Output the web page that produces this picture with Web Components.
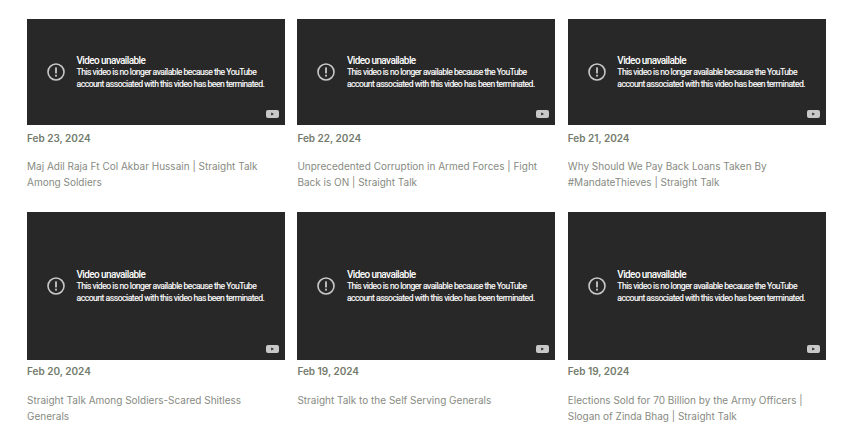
<!DOCTYPE html>
<html>
<head>
<meta charset="utf-8">
<style>
html, body { margin: 0; background: #fff; }
body { width: 862px; height: 432px; overflow: hidden; }
</style>
</head>
<body>
<post-grid>
  <video-card date="Feb 23, 2024" h="106" gap="6" tgap="13">Maj Adil Raja Ft Col Akbar Hussain | Straight Talk Among Soldiers</video-card>
  <video-card date="Feb 22, 2024" h="106" gap="6" tgap="13">Unprecedented Corruption in Armed Forces | Fight Back is ON | Straight Talk</video-card>
  <video-card date="Feb 21, 2024" h="106" gap="6" tgap="13">Why Should We Pay Back Loans Taken By #MandateThieves | Straight Talk</video-card>
  <video-card date="Feb 20, 2024" h="148" gap="4" tgap="14">Straight Talk Among Soldiers-Scared Shitless Generals</video-card>
  <video-card date="Feb 19, 2024" h="148" gap="4" tgap="14">Straight Talk to the Self Serving Generals</video-card>
  <video-card date="Feb 19, 2024" h="148" gap="4" tgap="14">Elections Sold for 70 Billion by the Army Officers | Slogan of Zinda Bhag | Straight Talk</video-card>
</post-grid>

<template id="grid-tpl">
<style>
:host { display: grid; grid-template-columns: repeat(3, 258px); column-gap: 12.4px; row-gap: 22px; padding: 19px 0 0 27px; }
</style>
<slot></slot>
</template>

<template id="player-tpl">
<style>
:host { display: flex; position: relative; align-items: center; background: #282828; color: #fff; font-family: Roboto, "Liberation Sans", sans-serif; }
.icon { width: 20px; height: 20px; margin-left: 19px; flex: none; }
.msg { margin-left: 10.5px; }
.head { font-size: 10px; font-weight: 500; line-height: 12px; letter-spacing: -0.6px; margin-bottom: -1px; }
.sub { font-size: 8.6px; line-height: 12px; letter-spacing: -0.49px; -webkit-text-stroke: 0.15px #fff; white-space: nowrap; }
.yt { position: absolute; right: 6px; bottom: 7px; width: 13px; height: 8px; }
</style>
<svg class="icon" viewBox="0 0 20 20"><circle cx="10" cy="10" r="8" fill="none" stroke="#c8c8c8" stroke-width="1.6"/><rect x="9.1" y="5.4" width="1.8" height="6" fill="#c8c8c8"/><rect x="9.1" y="12.7" width="1.8" height="1.9" fill="#c8c8c8"/></svg>
<div class="msg">
  <div class="head">Video unavailable</div>
  <div class="sub">This video is no longer available because the YouTube<br>account associated with this video has been terminated.</div>
</div>
<svg class="yt" viewBox="0 0 13 8"><rect width="13" height="8" rx="2" fill="#c8c8c8"/><path d="M5.2 2.4 8 4 5.2 5.6z" fill="#282828"/></svg>
</template>

<template id="card-tpl">
<style>
:host { display: block; font-family: Inter, "Liberation Sans", sans-serif; }
video-player { height: var(--h); }
.date { margin-top: var(--gap); font-size: 10px; font-weight: 600; line-height: 14px; color: #737b6c; }
.title { margin-top: var(--tgap); font-size: 10px; line-height: 16px; color: #878b82; }
</style>
<video-player></video-player>
<div class="date"></div>
<div class="title"><slot></slot></div>
</template>

<script>
function shadowFrom(el, id) {
  el.attachShadow({mode: 'open'}).appendChild(document.getElementById(id).content.cloneNode(true));
}

class PostGrid extends HTMLElement {
  constructor() { super(); shadowFrom(this, 'grid-tpl'); }
}
class VideoPlayer extends HTMLElement {
  constructor() { super(); shadowFrom(this, 'player-tpl'); }
}
class VideoCard extends HTMLElement {
  constructor() { super(); shadowFrom(this, 'card-tpl'); }
  connectedCallback() {
    this.style.setProperty('--h', this.getAttribute('h') + 'px');
    this.style.setProperty('--gap', this.getAttribute('gap') + 'px');
    this.style.setProperty('--tgap', this.getAttribute('tgap') + 'px');
    this.shadowRoot.querySelector('.date').textContent = this.getAttribute('date');
  }
}
customElements.define('video-player', VideoPlayer);
customElements.define('video-card', VideoCard);
customElements.define('post-grid', PostGrid);
</script>
</body>
</html>
